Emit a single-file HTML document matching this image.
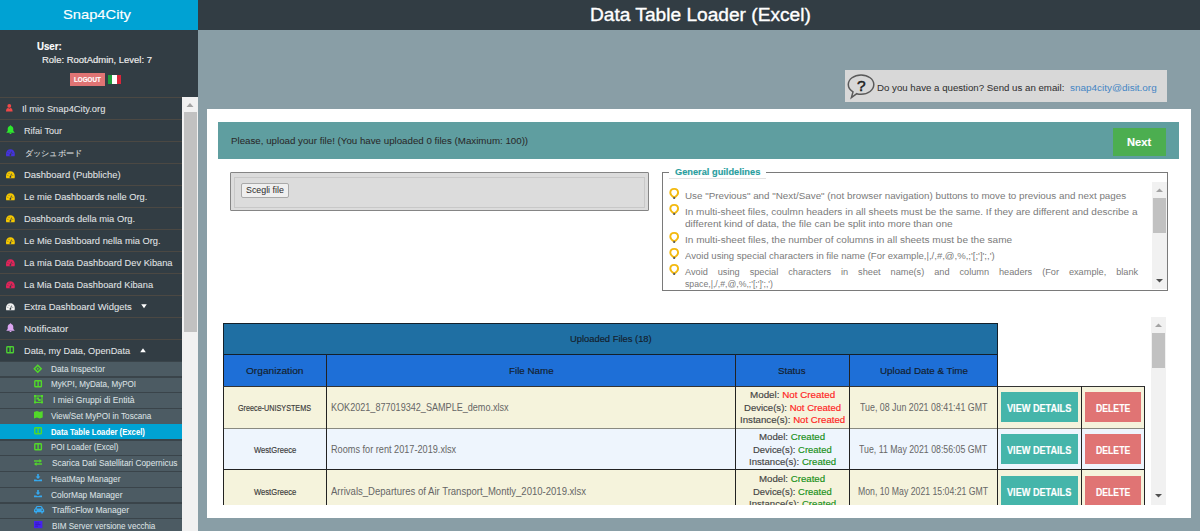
<!DOCTYPE html>
<html><head><meta charset="utf-8">
<style>
*{box-sizing:border-box;margin:0;padding:0}
html,body{width:1200px;height:531px;overflow:hidden;background:#899ea6;font-family:"Liberation Sans",sans-serif;position:relative}
.b{position:absolute}
.t{position:absolute;white-space:nowrap;line-height:1;-webkit-text-stroke:0.15px currentColor}
.t span{-webkit-text-stroke:0.15px currentColor}
svg{position:absolute;overflow:visible}
</style></head><body>
<!-- sidebar -->
<div class="b" style="left:0;top:0;width:198px;height:531px;background:#323d44"></div>
<div class="b" style="left:0;top:0;width:198px;height:30px;background:#00a2d3"></div>
<div class="b" style="left:70px;top:73px;width:35px;height:13px;background:#e07474"></div>
<div class="b" style="left:108px;top:75px;width:13px;height:9px;background:linear-gradient(90deg,#1f9d3c 0,#1f9d3c 4.3px,#fff 4.3px,#fff 8.6px,#d9253a 8.6px)"></div>
<!-- main menu dividers -->
<div class="b" style="left:0;top:97px;width:182px;height:264px;background:repeating-linear-gradient(180deg,#4b4843 0,#4b4843 1px,transparent 1px,transparent 22px)"></div>
<!-- sub items -->
<div class="b" style="left:0;top:360.5px;width:182px;height:171px;background:#4c5b63"></div>
<div class="b" style="left:0;top:360.50px;width:182px;height:1.4px;background:#3a444a"></div>
<div class="b" style="left:0;top:376.25px;width:182px;height:1.4px;background:#3a444a"></div>
<div class="b" style="left:0;top:392.00px;width:182px;height:1.4px;background:#3a444a"></div>
<div class="b" style="left:0;top:407.75px;width:182px;height:1.4px;background:#3a444a"></div>
<div class="b" style="left:0;top:423.50px;width:182px;height:1.4px;background:#3a444a"></div>
<div class="b" style="left:0;top:439.25px;width:182px;height:1.4px;background:#3a444a"></div>
<div class="b" style="left:0;top:455.00px;width:182px;height:1.4px;background:#3a444a"></div>
<div class="b" style="left:0;top:470.75px;width:182px;height:1.4px;background:#3a444a"></div>
<div class="b" style="left:0;top:486.50px;width:182px;height:1.4px;background:#3a444a"></div>
<div class="b" style="left:0;top:502.25px;width:182px;height:1.4px;background:#3a444a"></div>
<div class="b" style="left:0;top:518.00px;width:182px;height:1.4px;background:#3a444a"></div>

<div class="b" style="left:0;top:424.3px;width:182px;height:14.5px;background:#00a2d3"></div>
<!-- sidebar scrollbar -->
<div class="b" style="left:182px;top:97px;width:16px;height:434px;background:#f1f1f1"></div>
<div class="b" style="left:184px;top:112px;width:13px;height:220px;background:#c1c1c1"></div>
<svg style="left:182px;top:97px" width="16" height="15"><path d="M4.5 10 L8 6 L11.5 10 Z" fill="#a3a3a3"/></svg>
<!-- top bar -->
<div class="b" style="left:198px;top:0;width:1002px;height:30px;background:#323d44"></div>
<!-- question box -->
<div class="b" style="left:845px;top:70px;width:322px;height:32px;background:#d8d8d8"></div>
<svg style="left:844px;top:70px" width="36" height="32" viewBox="0 0 36 32">
 <path d="M17.05 4.9 C24.1 4.9 29.8 9.2 29.8 14.6 C29.8 20 24.1 24.3 17.05 24.3 C15.5 24.3 14.1 24.1 12.8 23.7 L7.4 27.6 L9 21.9 C6 20.1 4.3 17.5 4.3 14.6 C4.3 9.2 10 4.9 17.05 4.9 Z" fill="none" stroke="#5a5a5a" stroke-width="1.5"/>
 <text x="17.2" y="20.8" font-family="Liberation Sans" font-size="15.5" text-anchor="middle" fill="#1e1e1e" stroke="#1e1e1e" stroke-width="0.5">?</text>
</svg>
<!-- white panel -->
<div class="b" style="left:207px;top:109px;width:984px;height:409px;background:#fff"></div>
<div class="b" style="left:218px;top:122px;width:961px;height:37px;background:#5f9ea0"></div>
<div class="b" style="left:1113px;top:128px;width:53px;height:28px;background:#4cae50"></div>
<!-- file box -->
<div class="b" style="left:230px;top:172px;width:419px;height:39px;background:#dcdcdc;border:1px solid #858585;border-radius:1px"></div>
<div class="b" style="left:234px;top:177px;width:411px;height:31px;border:1px solid #c8c8c8"></div>
<div class="b" style="left:241px;top:183px;width:48px;height:15px;background:#efefef;border:1px solid #a9a9a9;border-radius:2px"></div>
<!-- fieldset -->
<div class="b" style="left:662px;top:172px;width:506px;height:119px;border:1px solid #7a7a7a;border-top:none"></div>
<div class="b" style="left:662px;top:172px;width:7px;height:1px;background:#7a7a7a"></div>
<div class="b" style="left:766px;top:172px;width:402px;height:1px;background:#7a7a7a"></div>
<div class="b" style="left:669px;top:178px;width:97px;height:1px;background:#e3e3e3"></div>
<!-- guideline scrollbar -->
<div class="b" style="left:1152px;top:182px;width:15px;height:107px;background:#f1f1f1"></div>
<div class="b" style="left:1153px;top:197.5px;width:13px;height:35.5px;background:#c1c1c1"></div>
<svg style="left:1152px;top:182px" width="15" height="107"><path d="M4 10 L7.5 6.5 L11 10 Z" fill="#a3a3a3"/><path d="M4 97 L7.5 100.5 L11 97 Z" fill="#505050"/></svg>
<svg style="left:668.5px;top:188.2px" width="11" height="12" viewBox="0 0 11 12"><path d="M5.2 9.6 C3.6 8.6 1.3 7 1.3 4.8 C1.3 2.5 3 0.9 5.2 0.9 C7.4 0.9 9.1 2.5 9.1 4.8 C9.1 7 6.8 8.6 5.2 9.6 Z" fill="none" stroke="#f3b90f" stroke-width="1.9"/><rect x="4.3" y="8.9" width="1.8" height="2.1" fill="#5a5f66"/></svg>
<svg style="left:668.5px;top:204.1px" width="11" height="12" viewBox="0 0 11 12"><path d="M5.2 9.6 C3.6 8.6 1.3 7 1.3 4.8 C1.3 2.5 3 0.9 5.2 0.9 C7.4 0.9 9.1 2.5 9.1 4.8 C9.1 7 6.8 8.6 5.2 9.6 Z" fill="none" stroke="#f3b90f" stroke-width="1.9"/><rect x="4.3" y="8.9" width="1.8" height="2.1" fill="#5a5f66"/></svg>
<svg style="left:668.5px;top:232.4px" width="11" height="12" viewBox="0 0 11 12"><path d="M5.2 9.6 C3.6 8.6 1.3 7 1.3 4.8 C1.3 2.5 3 0.9 5.2 0.9 C7.4 0.9 9.1 2.5 9.1 4.8 C9.1 7 6.8 8.6 5.2 9.6 Z" fill="none" stroke="#f3b90f" stroke-width="1.9"/><rect x="4.3" y="8.9" width="1.8" height="2.1" fill="#5a5f66"/></svg>
<svg style="left:668.5px;top:248.1px" width="11" height="12" viewBox="0 0 11 12"><path d="M5.2 9.6 C3.6 8.6 1.3 7 1.3 4.8 C1.3 2.5 3 0.9 5.2 0.9 C7.4 0.9 9.1 2.5 9.1 4.8 C9.1 7 6.8 8.6 5.2 9.6 Z" fill="none" stroke="#f3b90f" stroke-width="1.9"/><rect x="4.3" y="8.9" width="1.8" height="2.1" fill="#5a5f66"/></svg>
<svg style="left:668.5px;top:263.8px" width="11" height="12" viewBox="0 0 11 12"><path d="M5.2 9.6 C3.6 8.6 1.3 7 1.3 4.8 C1.3 2.5 3 0.9 5.2 0.9 C7.4 0.9 9.1 2.5 9.1 4.8 C9.1 7 6.8 8.6 5.2 9.6 Z" fill="none" stroke="#f3b90f" stroke-width="1.9"/><rect x="4.3" y="8.9" width="1.8" height="2.1" fill="#5a5f66"/></svg>

<!-- table -->
<div class="b" style="left:223px;top:323px;width:775px;height:32px;background:#1f6fa3;border:1px solid #14202a"></div>
<div class="b" style="left:223px;top:355px;width:775px;height:31px;background:#1e6fd7;border:1px solid #1a1a1a;border-top:none;border-bottom:none"></div>
<div class="b" style="left:223px;top:386px;width:922px;height:119px;background:#f5f3dc;border-left:1px solid #222;border-right:1px solid #222;border-top:1px solid #333"></div>
<div class="b" style="left:224px;top:428px;width:920px;height:42px;background:#eef5fd;border-top:1px solid #8a8a80;border-bottom:1px solid #222"></div>
<div class="b" style="left:326px;top:354px;width:1px;height:151px;background:#222"></div>
<div class="b" style="left:735px;top:354px;width:1px;height:151px;background:#222"></div>
<div class="b" style="left:849px;top:354px;width:1px;height:151px;background:#222"></div>
<div class="b" style="left:997px;top:386px;width:1px;height:119px;background:#222"></div>
<div class="b" style="left:1081px;top:386px;width:1px;height:119px;background:#222"></div>
<div class="b" style="left:1001px;top:392px;width:77px;height:30px;background:#45b5aa"></div>
<div class="b" style="left:1085px;top:392px;width:56px;height:30px;background:#e07474"></div>
<div class="b" style="left:1001px;top:434px;width:77px;height:30px;background:#45b5aa"></div>
<div class="b" style="left:1085px;top:434px;width:56px;height:30px;background:#e07474"></div>
<div class="b" style="left:1001px;top:476px;width:77px;height:30px;background:#45b5aa"></div>
<div class="b" style="left:1085px;top:476px;width:56px;height:30px;background:#e07474"></div>

<!-- table scrollbar -->
<div class="b" style="left:1151px;top:317px;width:15px;height:188px;background:#f1f1f1"></div>
<div class="b" style="left:1152px;top:332.5px;width:13px;height:35px;background:#c1c1c1"></div>
<svg style="left:1151px;top:317px" width="15" height="188"><path d="M4 10 L7.5 6.5 L11 10 Z" fill="#a3a3a3"/><path d="M4 177 L7.5 180.5 L11 177 Z" fill="#505050"/></svg>
<svg style="left:6px;top:104px" width="7" height="8" viewBox="0 0 7 8"><circle cx="3.3" cy="1.9" r="1.9" fill="#f04848"/><path d="M0 7.4 C0 5 1 4.2 2.2 4 L3.3 4.8 L4.4 4 C5.6 4.2 6.6 5 6.6 7.4 Z" fill="#f04848"/></svg>
<svg style="left:6.2px;top:125.3px" width="9" height="9" viewBox="0 0 9 9"><path d="M4.5 0.3 C5 0.3 5.2 0.7 5.2 1.1 C6.8 1.5 7.3 2.8 7.3 4.3 L7.3 5.9 L8.6 7.4 L8.6 7.8 L0.4 7.8 L0.4 7.4 L1.7 5.9 L1.7 4.3 C1.7 2.8 2.2 1.5 3.8 1.1 C3.8 0.7 4 0.3 4.5 0.3 Z" fill="#2ee82e"/><path d="M3.4 8 C3.5 8.6 4 9 4.5 9 C5 9 5.5 8.6 5.6 8 Z" fill="#2ee82e"/></svg>
<svg style="left:6.1px;top:148.5px" width="8.8" height="7.4" viewBox="0 0 10 8.4"><path d="M0.3 8.2 C0 7.3 0 6.6 0 5.6 C0 2.6 2.2 0.3 5 0.3 C7.8 0.3 10 2.6 10 5.6 C10 6.6 10 7.3 9.7 8.2 Z" fill="#4433dd"/><path d="M5 7 L6.3 3" stroke="#333d43" stroke-width="0.9"/><circle cx="5" cy="6.7" r="1" fill="#333d43"/><circle cx="2.2" cy="4.9" r="0.5" fill="#333d43"/><circle cx="3.4" cy="2.6" r="0.5" fill="#333d43"/><circle cx="7.8" cy="4.9" r="0.5" fill="#333d43"/></svg>
<svg style="left:6.1px;top:170.79999999999998px" width="8.8" height="7.4" viewBox="0 0 10 8.4"><path d="M0.3 8.2 C0 7.3 0 6.6 0 5.6 C0 2.6 2.2 0.3 5 0.3 C7.8 0.3 10 2.6 10 5.6 C10 6.6 10 7.3 9.7 8.2 Z" fill="#f5c800"/><path d="M5 7 L6.3 3" stroke="#333d43" stroke-width="0.9"/><circle cx="5" cy="6.7" r="1" fill="#333d43"/><circle cx="2.2" cy="4.9" r="0.5" fill="#333d43"/><circle cx="3.4" cy="2.6" r="0.5" fill="#333d43"/><circle cx="7.8" cy="4.9" r="0.5" fill="#333d43"/></svg>
<svg style="left:6.1px;top:192.79999999999998px" width="8.8" height="7.4" viewBox="0 0 10 8.4"><path d="M0.3 8.2 C0 7.3 0 6.6 0 5.6 C0 2.6 2.2 0.3 5 0.3 C7.8 0.3 10 2.6 10 5.6 C10 6.6 10 7.3 9.7 8.2 Z" fill="#f5c800"/><path d="M5 7 L6.3 3" stroke="#333d43" stroke-width="0.9"/><circle cx="5" cy="6.7" r="1" fill="#333d43"/><circle cx="2.2" cy="4.9" r="0.5" fill="#333d43"/><circle cx="3.4" cy="2.6" r="0.5" fill="#333d43"/><circle cx="7.8" cy="4.9" r="0.5" fill="#333d43"/></svg>
<svg style="left:6.1px;top:214.79999999999998px" width="8.8" height="7.4" viewBox="0 0 10 8.4"><path d="M0.3 8.2 C0 7.3 0 6.6 0 5.6 C0 2.6 2.2 0.3 5 0.3 C7.8 0.3 10 2.6 10 5.6 C10 6.6 10 7.3 9.7 8.2 Z" fill="#f5c800"/><path d="M5 7 L6.3 3" stroke="#333d43" stroke-width="0.9"/><circle cx="5" cy="6.7" r="1" fill="#333d43"/><circle cx="2.2" cy="4.9" r="0.5" fill="#333d43"/><circle cx="3.4" cy="2.6" r="0.5" fill="#333d43"/><circle cx="7.8" cy="4.9" r="0.5" fill="#333d43"/></svg>
<svg style="left:6.1px;top:236.79999999999998px" width="8.8" height="7.4" viewBox="0 0 10 8.4"><path d="M0.3 8.2 C0 7.3 0 6.6 0 5.6 C0 2.6 2.2 0.3 5 0.3 C7.8 0.3 10 2.6 10 5.6 C10 6.6 10 7.3 9.7 8.2 Z" fill="#f5c800"/><path d="M5 7 L6.3 3" stroke="#333d43" stroke-width="0.9"/><circle cx="5" cy="6.7" r="1" fill="#333d43"/><circle cx="2.2" cy="4.9" r="0.5" fill="#333d43"/><circle cx="3.4" cy="2.6" r="0.5" fill="#333d43"/><circle cx="7.8" cy="4.9" r="0.5" fill="#333d43"/></svg>
<svg style="left:6.1px;top:258.8px" width="8.8" height="7.4" viewBox="0 0 10 8.4"><path d="M0.3 8.2 C0 7.3 0 6.6 0 5.6 C0 2.6 2.2 0.3 5 0.3 C7.8 0.3 10 2.6 10 5.6 C10 6.6 10 7.3 9.7 8.2 Z" fill="#e2245a"/><path d="M5 7 L6.3 3" stroke="#333d43" stroke-width="0.9"/><circle cx="5" cy="6.7" r="1" fill="#333d43"/><circle cx="2.2" cy="4.9" r="0.5" fill="#333d43"/><circle cx="3.4" cy="2.6" r="0.5" fill="#333d43"/><circle cx="7.8" cy="4.9" r="0.5" fill="#333d43"/></svg>
<svg style="left:6.1px;top:280.8px" width="8.8" height="7.4" viewBox="0 0 10 8.4"><path d="M0.3 8.2 C0 7.3 0 6.6 0 5.6 C0 2.6 2.2 0.3 5 0.3 C7.8 0.3 10 2.6 10 5.6 C10 6.6 10 7.3 9.7 8.2 Z" fill="#e2245a"/><path d="M5 7 L6.3 3" stroke="#333d43" stroke-width="0.9"/><circle cx="5" cy="6.7" r="1" fill="#333d43"/><circle cx="2.2" cy="4.9" r="0.5" fill="#333d43"/><circle cx="3.4" cy="2.6" r="0.5" fill="#333d43"/><circle cx="7.8" cy="4.9" r="0.5" fill="#333d43"/></svg>
<svg style="left:6.1px;top:302.8px" width="8.8" height="7.4" viewBox="0 0 10 8.4"><path d="M0.3 8.2 C0 7.3 0 6.6 0 5.6 C0 2.6 2.2 0.3 5 0.3 C7.8 0.3 10 2.6 10 5.6 C10 6.6 10 7.3 9.7 8.2 Z" fill="#f2f2f2"/><path d="M5 7 L6.3 3" stroke="#333d43" stroke-width="0.9"/><circle cx="5" cy="6.7" r="1" fill="#333d43"/><circle cx="2.2" cy="4.9" r="0.5" fill="#333d43"/><circle cx="3.4" cy="2.6" r="0.5" fill="#333d43"/><circle cx="7.8" cy="4.9" r="0.5" fill="#333d43"/></svg>
<svg style="left:6.2px;top:323.4px" width="9" height="9" viewBox="0 0 9 9"><path d="M4.5 0.3 C5 0.3 5.2 0.7 5.2 1.1 C6.8 1.5 7.3 2.8 7.3 4.3 L7.3 5.9 L8.6 7.4 L8.6 7.8 L0.4 7.8 L0.4 7.4 L1.7 5.9 L1.7 4.3 C1.7 2.8 2.2 1.5 3.8 1.1 C3.8 0.7 4 0.3 4.5 0.3 Z" fill="#dca6f2"/><path d="M3.4 8 C3.5 8.6 4 9 4.5 9 C5 9 5.5 8.6 5.6 8 Z" fill="#dca6f2"/></svg>
<svg style="left:6px;top:346px" width="8.2" height="7.4" viewBox="0 0 8 7.4"><rect x="0.7" y="0.7" width="6.6" height="6" rx="0.8" fill="none" stroke="#4ccf33" stroke-width="1.4"/><path d="M4 0.7 V6.7" stroke="#4ccf33" stroke-width="1.4"/></svg>
<svg style="left:140.5px;top:303.5px" width="6" height="4.5" viewBox="0 0 6 4.5"><path d="M0.2 0.3 H5.8 L3 4.2 Z" fill="#fff"/></svg>
<svg style="left:139.5px;top:348px" width="6" height="4.5" viewBox="0 0 6 4.5"><path d="M0.2 4.2 H5.8 L3 0.3 Z" fill="#fff"/></svg>
<svg style="left:34px;top:364.5px" width="7.5" height="7.5" viewBox="0 0 7.5 7.5"><path d="M3.75 0.3 L7.2 3.75 L3.75 7.2 L0.3 3.75 Z" fill="none" stroke="#52d92a" stroke-width="1.5"/><circle cx="3.75" cy="3.75" r="0.9" fill="#52d92a"/></svg>
<svg style="left:34px;top:380.2px" width="8.2" height="7.4" viewBox="0 0 8 7.4"><rect x="0.7" y="0.7" width="6.6" height="6" rx="0.8" fill="none" stroke="#52d92a" stroke-width="1.4"/><path d="M4 0.7 V6.7" stroke="#52d92a" stroke-width="1.4"/></svg>
<svg style="left:34px;top:395.3px" width="9" height="8.4" viewBox="0 0 9 8.4"><rect x="1" y="1" width="7" height="6.4" fill="none" stroke="#52d92a" stroke-width="1.2"/><rect x="0" y="0" width="2" height="2" fill="#52d92a"/><rect x="7" y="0" width="2" height="2" fill="#52d92a"/><rect x="0" y="6.4" width="2" height="2" fill="#52d92a"/><rect x="7" y="6.4" width="2" height="2" fill="#52d92a"/><rect x="2.5" y="2.5" width="2.5" height="2" fill="#52d92a"/><rect x="4.2" y="4" width="2.5" height="2" fill="#52d92a"/></svg>
<svg style="left:34px;top:411px" width="8.7" height="7.6" viewBox="0 0 8.7 7.6"><path d="M0 1 L2.9 0 L5.8 1 L8.7 0 L8.7 6.6 L5.8 7.6 L2.9 6.6 L0 7.6 Z" fill="#52d92a"/></svg>
<svg style="left:34px;top:427px" width="8.2" height="7.4" viewBox="0 0 8 7.4"><rect x="0.7" y="0.7" width="6.6" height="6" rx="0.8" fill="none" stroke="#52d92a" stroke-width="1.4"/><path d="M4 0.7 V6.7" stroke="#52d92a" stroke-width="1.4"/></svg>
<svg style="left:34px;top:443.2px" width="8.2" height="7.4" viewBox="0 0 8 7.4"><rect x="0.7" y="0.7" width="6.6" height="6" rx="0.8" fill="none" stroke="#52d92a" stroke-width="1.4"/><path d="M4 0.7 V6.7" stroke="#52d92a" stroke-width="1.4"/></svg>
<svg style="left:34px;top:459px" width="8" height="7" viewBox="0 0 8 7"><path d="M0 2 H6.5" stroke="#52d92a" stroke-width="1.4"/><path d="M5.5 0 L8 2 L5.5 4 Z" fill="#52d92a"/><path d="M8 5 H1.5" stroke="#52d92a" stroke-width="1.4"/><path d="M2.5 3 L0 5 L2.5 7 Z" fill="#52d92a"/></svg>
<svg style="left:34px;top:474px" width="8" height="7.2" viewBox="0 0 8 7.2"><path d="M3.2 0 H4.8 V2.6 H6.4 L4 5 L1.6 2.6 H3.2 Z" fill="#36aaf0"/><path d="M0 5.4 H2 L4 6.2 L6 5.4 H8 V7.2 H0 Z" fill="#36aaf0"/></svg>
<svg style="left:34px;top:489.8px" width="8" height="7.2" viewBox="0 0 8 7.2"><path d="M3.2 0 H4.8 V2.6 H6.4 L4 5 L1.6 2.6 H3.2 Z" fill="#36aaf0"/><path d="M0 5.4 H2 L4 6.2 L6 5.4 H8 V7.2 H0 Z" fill="#36aaf0"/></svg>
<svg style="left:33.7px;top:505.6px" width="10.2" height="7.6" viewBox="0 0 10.2 7.6"><path d="M2 0.8 C2.3 0.2 2.7 0 3.3 0 H6.9 C7.5 0 7.9 0.2 8.2 0.8 L9 2.6 C9.7 2.9 10.2 3.5 10.2 4.3 V6.2 H8.8 V7.6 H7.3 V6.2 H2.9 V7.6 H1.4 V6.2 H0 V4.3 C0 3.5 0.5 2.9 1.2 2.6 Z" fill="#36aaf0"/><path d="M2.6 2.5 L3.3 1 H6.9 L7.6 2.5 Z" fill="#4c5b63"/><rect x="1.2" y="3.6" width="1.4" height="1.2" fill="#4c5b63"/><rect x="7.6" y="3.6" width="1.4" height="1.2" fill="#4c5b63"/></svg>
<svg style="left:34px;top:521.3px" width="8.4" height="7.2" viewBox="0 0 8.4 7.2"><rect x="0" y="0" width="8.4" height="7.2" fill="#4422ee"/><path d="M1.2 2 H5 M1.2 3.6 H6.5 M1.2 5.2 H4" stroke="#3311aa" stroke-width="0.6"/></svg>

<div class="t" style="left:63.30px;top:8.19px;font-size:13px;color:#fff;transform:scaleX(1.1310);transform-origin:0 0;">Snap4City</div>
<div class="t" style="left:37.30px;top:41.88px;font-size:10.3px;font-weight:bold;color:#fff;transform:scaleX(0.9384);transform-origin:0 0;">User:</div>
<div class="t" style="left:42.20px;top:55.72px;font-size:8.6px;color:#eee;transform:scaleX(1.1014);transform-origin:0 0;">Role: RootAdmin, Level: 7</div>
<div class="t" style="left:73.80px;top:76.07px;font-size:7px;font-weight:bold;color:#fff;transform:scaleX(0.8935);transform-origin:0 0;">LOGOUT</div>
<div class="t" style="left:21.80px;top:104.89px;font-size:8.4px;color:#e2e5e7;transform:scaleX(1.1141);transform-origin:0 0;-webkit-text-stroke:0.05px;">Il mio Snap4City.org</div>
<div class="t" style="left:24.20px;top:126.89px;font-size:8.4px;color:#e2e5e7;transform:scaleX(1.0820);transform-origin:0 0;-webkit-text-stroke:0.05px;">Rifai Tour</div>
<div class="t" style="left:24.50px;top:148.89px;font-size:8.4px;color:#e2e5e7;transform:scaleX(1.0161);transform-origin:0 0;-webkit-text-stroke:0.05px;">ダッシュボード</div>
<div class="t" style="left:24.00px;top:170.89px;font-size:8.4px;color:#e2e5e7;transform:scaleX(1.1284);transform-origin:0 0;-webkit-text-stroke:0.05px;">Dashboard (Pubbliche)</div>
<div class="t" style="left:24.00px;top:192.89px;font-size:8.4px;color:#e2e5e7;transform:scaleX(1.1079);transform-origin:0 0;-webkit-text-stroke:0.05px;">Le mie Dashboards nelle Org.</div>
<div class="t" style="left:24.00px;top:214.89px;font-size:8.4px;color:#e2e5e7;transform:scaleX(1.1149);transform-origin:0 0;-webkit-text-stroke:0.05px;">Dashboards della mia Org.</div>
<div class="t" style="left:24.00px;top:236.89px;font-size:8.4px;color:#e2e5e7;transform:scaleX(1.1112);transform-origin:0 0;-webkit-text-stroke:0.05px;">Le Mie Dashboard nella mia Org.</div>
<div class="t" style="left:24.00px;top:258.89px;font-size:8.4px;color:#e2e5e7;transform:scaleX(1.1077);transform-origin:0 0;-webkit-text-stroke:0.05px;">La mia Data Dashboard Dev Kibana</div>
<div class="t" style="left:24.00px;top:280.89px;font-size:8.4px;color:#e2e5e7;transform:scaleX(1.1041);transform-origin:0 0;-webkit-text-stroke:0.05px;">La Mia Data Dashboard Kibana</div>
<div class="t" style="left:24.00px;top:302.89px;font-size:8.4px;color:#e2e5e7;transform:scaleX(1.1298);transform-origin:0 0;-webkit-text-stroke:0.05px;">Extra Dashboard Widgets</div>
<div class="t" style="left:24.00px;top:324.89px;font-size:8.4px;color:#e2e5e7;transform:scaleX(1.1764);transform-origin:0 0;-webkit-text-stroke:0.05px;">Notificator</div>
<div class="t" style="left:24.00px;top:346.89px;font-size:8.4px;color:#e2e5e7;transform:scaleX(1.1013);transform-origin:0 0;-webkit-text-stroke:0.05px;">Data, my Data, OpenData</div>
<div class="t" style="left:50.80px;top:365.66px;font-size:8.2px;color:#dde1e3;transform:scaleX(1.0127);transform-origin:0 0;-webkit-text-stroke:0.05px;">Data Inspector</div>
<div class="t" style="left:51.20px;top:381.41px;font-size:8.2px;color:#dde1e3;transform:scaleX(0.9842);transform-origin:0 0;-webkit-text-stroke:0.05px;">MyKPI, MyData, MyPOI</div>
<div class="t" style="left:52.60px;top:397.16px;font-size:8.2px;color:#dde1e3;transform:scaleX(1.0417);transform-origin:0 0;-webkit-text-stroke:0.05px;">I miei Gruppi di Entità</div>
<div class="t" style="left:51.20px;top:412.91px;font-size:8.2px;color:#dde1e3;transform:scaleX(0.9969);transform-origin:0 0;-webkit-text-stroke:0.05px;">View/Set MyPOI in Toscana</div>
<div class="t" style="left:50.80px;top:428.66px;font-size:8.2px;font-weight:bold;color:#fff;transform:scaleX(0.9442);transform-origin:0 0;-webkit-text-stroke:0.05px;">Data Table Loader (Excel)</div>
<div class="t" style="left:51.20px;top:444.41px;font-size:8.2px;color:#dde1e3;transform:scaleX(0.9686);transform-origin:0 0;-webkit-text-stroke:0.05px;">POI Loader (Excel)</div>
<div class="t" style="left:51.70px;top:460.16px;font-size:8.2px;color:#dde1e3;transform:scaleX(1.0131);transform-origin:0 0;-webkit-text-stroke:0.05px;">Scarica Dati Satellitari Copernicus</div>
<div class="t" style="left:51.20px;top:475.91px;font-size:8.2px;color:#dde1e3;transform:scaleX(1.0237);transform-origin:0 0;-webkit-text-stroke:0.05px;">HeatMap Manager</div>
<div class="t" style="left:50.60px;top:491.66px;font-size:8.2px;color:#dde1e3;transform:scaleX(1.0191);transform-origin:0 0;-webkit-text-stroke:0.05px;">ColorMap Manager</div>
<div class="t" style="left:52.00px;top:507.41px;font-size:8.2px;color:#dde1e3;transform:scaleX(1.0398);transform-origin:0 0;-webkit-text-stroke:0.05px;">TrafficFlow Manager</div>
<div class="t" style="left:51.80px;top:523.16px;font-size:8.2px;color:#dde1e3;transform:scaleX(0.9919);transform-origin:0 0;-webkit-text-stroke:0.05px;">BIM Server versione vecchia</div>
<div class="t" style="left:589.94px;top:5.76px;font-size:18px;color:#fff;transform:scaleX(1.0625);transform-origin:0 0;-webkit-text-stroke:0.35px;">Data Table Loader (Excel)</div>
<div class="t" style="left:877.30px;top:83.80px;font-size:8.5px;color:#333;transform:scaleX(1.1391);transform-origin:0 0;-webkit-text-stroke:0.05px;">Do you have a question? Send us an email:</div>
<div class="t" style="left:1069.70px;top:83.80px;font-size:8.5px;color:#4485c4;transform:scaleX(1.1666);transform-origin:0 0;-webkit-text-stroke:0;">snap4city@disit.org</div>
<div class="t" style="left:230.70px;top:137.10px;font-size:8.5px;color:#2b2b2b;transform:scaleX(1.1447);transform-origin:0 0;-webkit-text-stroke:0.05px;">Please, upload your file! (You have uploaded 0 files (Maximum: 100))</div>
<div class="t" style="left:1127.00px;top:136.55px;font-size:11.4px;font-weight:bold;color:#fff;transform:scaleX(0.9761);transform-origin:0 0;">Next</div>
<div class="t" style="left:246.20px;top:185.88px;font-size:9px;color:#2a2a2a;transform:scaleX(0.9815);transform-origin:0 0;-webkit-text-stroke:0;">Scegli file</div>
<div class="t" style="left:675.00px;top:167.26px;font-size:9.5px;font-weight:bold;color:#2a9e9e;transform:scaleX(0.9730);transform-origin:0 0;">General guildelines</div>
<div class="t" style="left:685.00px;top:192.31px;font-size:9.2px;color:#7a7a7a;transform:scaleX(1.0697);transform-origin:0 0;-webkit-text-stroke:0;">Use &quot;Previous&quot; and &quot;Next/Save&quot; (not browser navigation) buttons to move to previous and next pages</div>
<div class="t" style="left:685.00px;top:208.31px;font-size:9.2px;color:#7a7a7a;transform:scaleX(1.0890);transform-origin:0 0;-webkit-text-stroke:0;">In multi-sheet files, coulmn headers in all sheets must be the same. If they are different and describe a</div>
<div class="t" style="left:685.00px;top:220.31px;font-size:9.2px;color:#7a7a7a;transform:scaleX(1.0993);transform-origin:0 0;-webkit-text-stroke:0;">different kind of data, the file can be split into more than one</div>
<div class="t" style="left:685.00px;top:236.11px;font-size:9.2px;color:#7a7a7a;transform:scaleX(1.0932);transform-origin:0 0;-webkit-text-stroke:0;">In multi-sheet files, the number of columns in all sheets must be the same</div>
<div class="t" style="left:685.00px;top:252.11px;font-size:9.2px;color:#7a7a7a;transform:scaleX(1.0378);transform-origin:0 0;-webkit-text-stroke:0;">Avoid using special characters in file name (For example,|,/,#,@,%,;&#x27;[;&#x27;]&#x27;;,&#x27;)</div>
<div class="t" style="left:685.00px;top:267.71px;font-size:9.2px;color:#7a7a7a;word-spacing:7.387px;-webkit-text-stroke:0;">Avoid using special characters in sheet name(s) and column headers (For example, blank</div>
<div class="t" style="left:685.00px;top:280.11px;font-size:9.2px;color:#7a7a7a;transform:scaleX(0.9471);transform-origin:0 0;-webkit-text-stroke:0;">space,|,/,#,@,%,;&#x27;[;&#x27;]&#x27;;,&#x27;)</div>
<div class="t" style="left:570.00px;top:335.18px;font-size:9px;color:#14202c;transform:scaleX(1.0402);transform-origin:0 0;">Uploaded Files (18)</div>
<div class="t" style="left:246.10px;top:365.86px;font-size:9.5px;color:#14202c;transform:scaleX(1.0657);transform-origin:0 0;">Organization</div>
<div class="t" style="left:509.00px;top:365.66px;font-size:9.5px;color:#14202c;transform:scaleX(1.0301);transform-origin:0 0;">File Name</div>
<div class="t" style="left:778.40px;top:365.86px;font-size:9.5px;color:#14202c;transform:scaleX(1.0227);transform-origin:0 0;">Status</div>
<div class="t" style="left:879.70px;top:365.66px;font-size:9.5px;color:#14202c;transform:scaleX(1.0353);transform-origin:0 0;">Upload Date &amp; Time</div>
<div class="t" style="left:238.40px;top:403.67px;font-size:8.3px;color:#3a3a3a;transform:scaleX(0.8699);transform-origin:0 0;">Greece-UNISYSTEMS</div>
<div class="t" style="left:330.80px;top:403.38px;font-size:10.3px;color:#666;transform:scaleX(0.8816);transform-origin:0 0;-webkit-text-stroke:0;">KOK2021_877019342_SAMPLE_demo.xlsx</div>
<div class="t" style="left:859.80px;top:403.38px;font-size:10.3px;color:#666;transform:scaleX(0.8588);transform-origin:0 0;-webkit-text-stroke:0;">Tue, 08 Jun 2021 08:41:41 GMT</div>
<div class="t" style="left:1007.30px;top:403.93px;font-size:10px;font-weight:bold;color:#fff;transform:scaleX(0.9137);transform-origin:0 0;">VIEW DETAILS</div>
<div class="t" style="left:1095.50px;top:403.93px;font-size:10px;font-weight:bold;color:#fff;transform:scaleX(0.8673);transform-origin:0 0;">DELETE</div>
<div class="t" style="left:750.00px;top:390.26px;font-size:9.5px;color:#444;transform:scaleX(1.0330);transform-origin:0 0;">Model: <span style="color:#f22">Not Created</span></div>
<div class="t" style="left:743.80px;top:402.56px;font-size:9.5px;color:#444;transform:scaleX(1.0049);transform-origin:0 0;">Device(s): <span style="color:#f22">Not Created</span></div>
<div class="t" style="left:739.90px;top:414.86px;font-size:9.5px;color:#444;transform:scaleX(1.0164);transform-origin:0 0;">Instance(s): <span style="color:#f22">Not Created</span></div>
<div class="t" style="left:253.80px;top:445.67px;font-size:8.3px;color:#3a3a3a;transform:scaleX(0.9192);transform-origin:0 0;">WestGreece</div>
<div class="t" style="left:330.80px;top:445.38px;font-size:10.3px;color:#666;transform:scaleX(0.8888);transform-origin:0 0;-webkit-text-stroke:0;">Rooms for rent 2017-2019.xlsx</div>
<div class="t" style="left:859.10px;top:445.38px;font-size:10.3px;color:#666;transform:scaleX(0.8516);transform-origin:0 0;-webkit-text-stroke:0;">Tue, 11 May 2021 08:56:05 GMT</div>
<div class="t" style="left:1007.30px;top:445.93px;font-size:10px;font-weight:bold;color:#fff;transform:scaleX(0.9137);transform-origin:0 0;">VIEW DETAILS</div>
<div class="t" style="left:1095.50px;top:445.93px;font-size:10px;font-weight:bold;color:#fff;transform:scaleX(0.8673);transform-origin:0 0;">DELETE</div>
<div class="t" style="left:759.30px;top:432.26px;font-size:9.5px;color:#444;transform:scaleX(1.0175);transform-origin:0 0;">Model: <span style="color:#168f16">Created</span></div>
<div class="t" style="left:753.10px;top:444.56px;font-size:9.5px;color:#444;transform:scaleX(0.9936);transform-origin:0 0;">Device(s): <span style="color:#168f16">Created</span></div>
<div class="t" style="left:748.70px;top:456.86px;font-size:9.5px;color:#444;transform:scaleX(1.0119);transform-origin:0 0;">Instance(s): <span style="color:#168f16">Created</span></div>
<div class="t" style="left:253.80px;top:487.67px;font-size:8.3px;color:#3a3a3a;transform:scaleX(0.9192);transform-origin:0 0;">WestGreece</div>
<div class="t" style="left:330.80px;top:487.38px;font-size:10.3px;color:#666;transform:scaleX(0.9264);transform-origin:0 0;-webkit-text-stroke:0;">Arrivals_Departures of Air Transport_Montly_2010-2019.xlsx</div>
<div class="t" style="left:858.30px;top:487.38px;font-size:10.3px;color:#666;transform:scaleX(0.8450);transform-origin:0 0;-webkit-text-stroke:0;">Mon, 10 May 2021 15:04:21 GMT</div>
<div class="t" style="left:1007.30px;top:487.93px;font-size:10px;font-weight:bold;color:#fff;transform:scaleX(0.9137);transform-origin:0 0;">VIEW DETAILS</div>
<div class="t" style="left:1095.50px;top:487.93px;font-size:10px;font-weight:bold;color:#fff;transform:scaleX(0.8673);transform-origin:0 0;">DELETE</div>
<div class="t" style="left:759.30px;top:474.26px;font-size:9.5px;color:#444;transform:scaleX(1.0175);transform-origin:0 0;">Model: <span style="color:#168f16">Created</span></div>
<div class="t" style="left:753.10px;top:486.56px;font-size:9.5px;color:#444;transform:scaleX(0.9936);transform-origin:0 0;">Device(s): <span style="color:#168f16">Created</span></div>
<div class="t" style="left:748.70px;top:498.86px;font-size:9.5px;color:#444;transform:scaleX(1.0119);transform-origin:0 0;">Instance(s): <span style="color:#168f16">Created</span></div>
<div class="b" style="left:207px;top:505px;width:943px;height:13px;background:#fff"></div>
</body></html>
